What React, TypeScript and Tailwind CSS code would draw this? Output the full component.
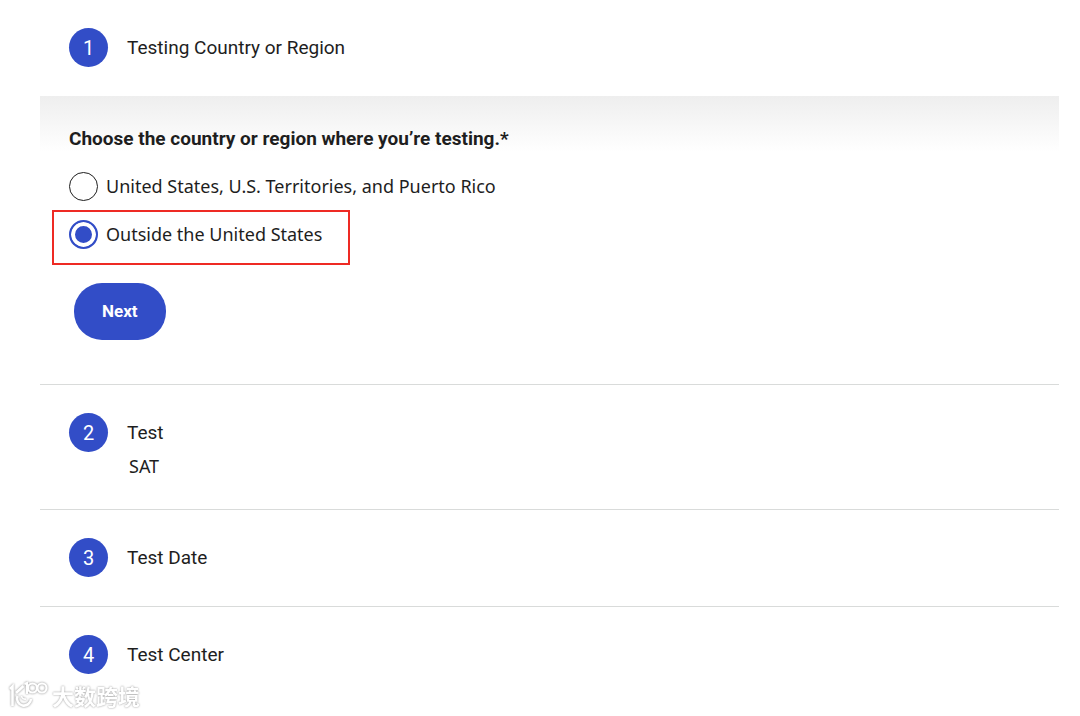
import { useState, type ReactNode } from "react";

const regions = [
  { id: "us", label: "United States, U.S. Territories, and Puerto Rico" },
  { id: "outside", label: "Outside the United States", highlight: true },
];

type StepProps = {
  number: number;
  title: string;
  summary?: string;
  children?: ReactNode;
};

function Step({ number, title, summary, children }: StepProps) {
  return (
    <li className="border-b border-[#d9dbda] last:border-b-0">
      <div className="flex items-start gap-[19px] px-[29px] pt-7 pb-[29px]">
        <span className="flex size-[39px] shrink-0 items-center justify-center rounded-full bg-[#324dc7] text-[20px] text-white">
          {number}
        </span>
        <div>
          <h2 className="text-[19px] leading-[39px]">{title}</h2>
          {summary && (
            <p className="pl-0.5 font-['Noto_Sans',sans-serif] text-[18px] leading-7">
              {summary}
            </p>
          )}
        </div>
      </div>
      {children}
    </li>
  );
}

function Watermark() {
  return (
    <div className="pointer-events-none fixed bottom-1.5 left-2 flex items-center gap-1 text-white">
      <svg
        viewBox="0 0 40 30"
        className="h-[30px] w-10 drop-shadow-[0_0_1px_#888]"
        fill="none"
        stroke="currentColor"
        strokeWidth="2.6"
        aria-hidden="true"
      >
        <path d="M2 9 L4.5 6.5 V26" />
        <path d="M15.5 6 L8 13" />
        <path d="M9.5 16 A7 7 0 1 0 23 19" />
        <path d="M13.5 16 A3.5 3.5 0 0 0 18 19" strokeWidth="1.6" />
        <path d="M16.5 4 L19 3 V14" strokeWidth="2" />
        <circle cx="24.5" cy="8" r="4.5" strokeWidth="2.2" />
        <circle cx="34" cy="8" r="4.5" strokeWidth="2.2" />
      </svg>
      <span className="font-['Noto_Sans_CJK_SC',sans-serif] text-[22px] leading-7 font-bold [text-shadow:0_0_2px_#888]">
        大数跨境
      </span>
    </div>
  );
}

export default function App() {
  const [region, setRegion] = useState("outside");

  return (
    <main className="bg-white pr-[21px] pl-10 font-[Roboto,sans-serif] text-[#1e1e1e]">
      <ol>
        <Step number={1} title="Testing Country or Region">
          <form
            className="bg-linear-to-b from-[#eeeeee] to-white to-[56px] px-[29px] pt-[29px] pb-11"
            onSubmit={(e) => e.preventDefault()}
          >
            <fieldset>
              <legend className="text-[19px] leading-7 font-bold">
                Choose the country or region where you’re testing.*
              </legend>

              <div className="mt-[19px] flex flex-col items-start gap-[19px]">
                {regions.map((item) => (
                  <div key={item.id} className="relative flex items-center gap-2">
                    <input
                      type="radio"
                      id={item.id}
                      name="region"
                      value={item.id}
                      checked={region === item.id}
                      onChange={() => setRegion(item.id)}
                      className="size-[29px] appearance-none rounded-full border border-[#1e1e1e] bg-white checked:border-2 checked:border-[#324dc7] checked:bg-[#324dc7] checked:shadow-[inset_0_0_0_4px_white]"
                    />
                    <label
                      htmlFor={item.id}
                      className="font-['Noto_Sans',sans-serif] text-[18px] leading-[29px]"
                    >
                      {item.label}
                    </label>
                    {item.highlight && (
                      <div className="pointer-events-none absolute -top-2.5 -right-7 -bottom-4 -left-[17px] border-2 border-[#ee2a24]" />
                    )}
                  </div>
                ))}
              </div>
            </fieldset>

            <button
              type="submit"
              className="mt-[34px] ml-[5px] rounded-[28px] bg-[#324dc7] px-7 py-4 text-[17px] leading-[25px] font-bold text-white"
            >
              Next
            </button>
          </form>
        </Step>
        <Step number={2} title="Test" summary="SAT" />
        <Step number={3} title="Test Date" />
        <Step number={4} title="Test Center" />
      </ol>
      <Watermark />
    </main>
  );
}
